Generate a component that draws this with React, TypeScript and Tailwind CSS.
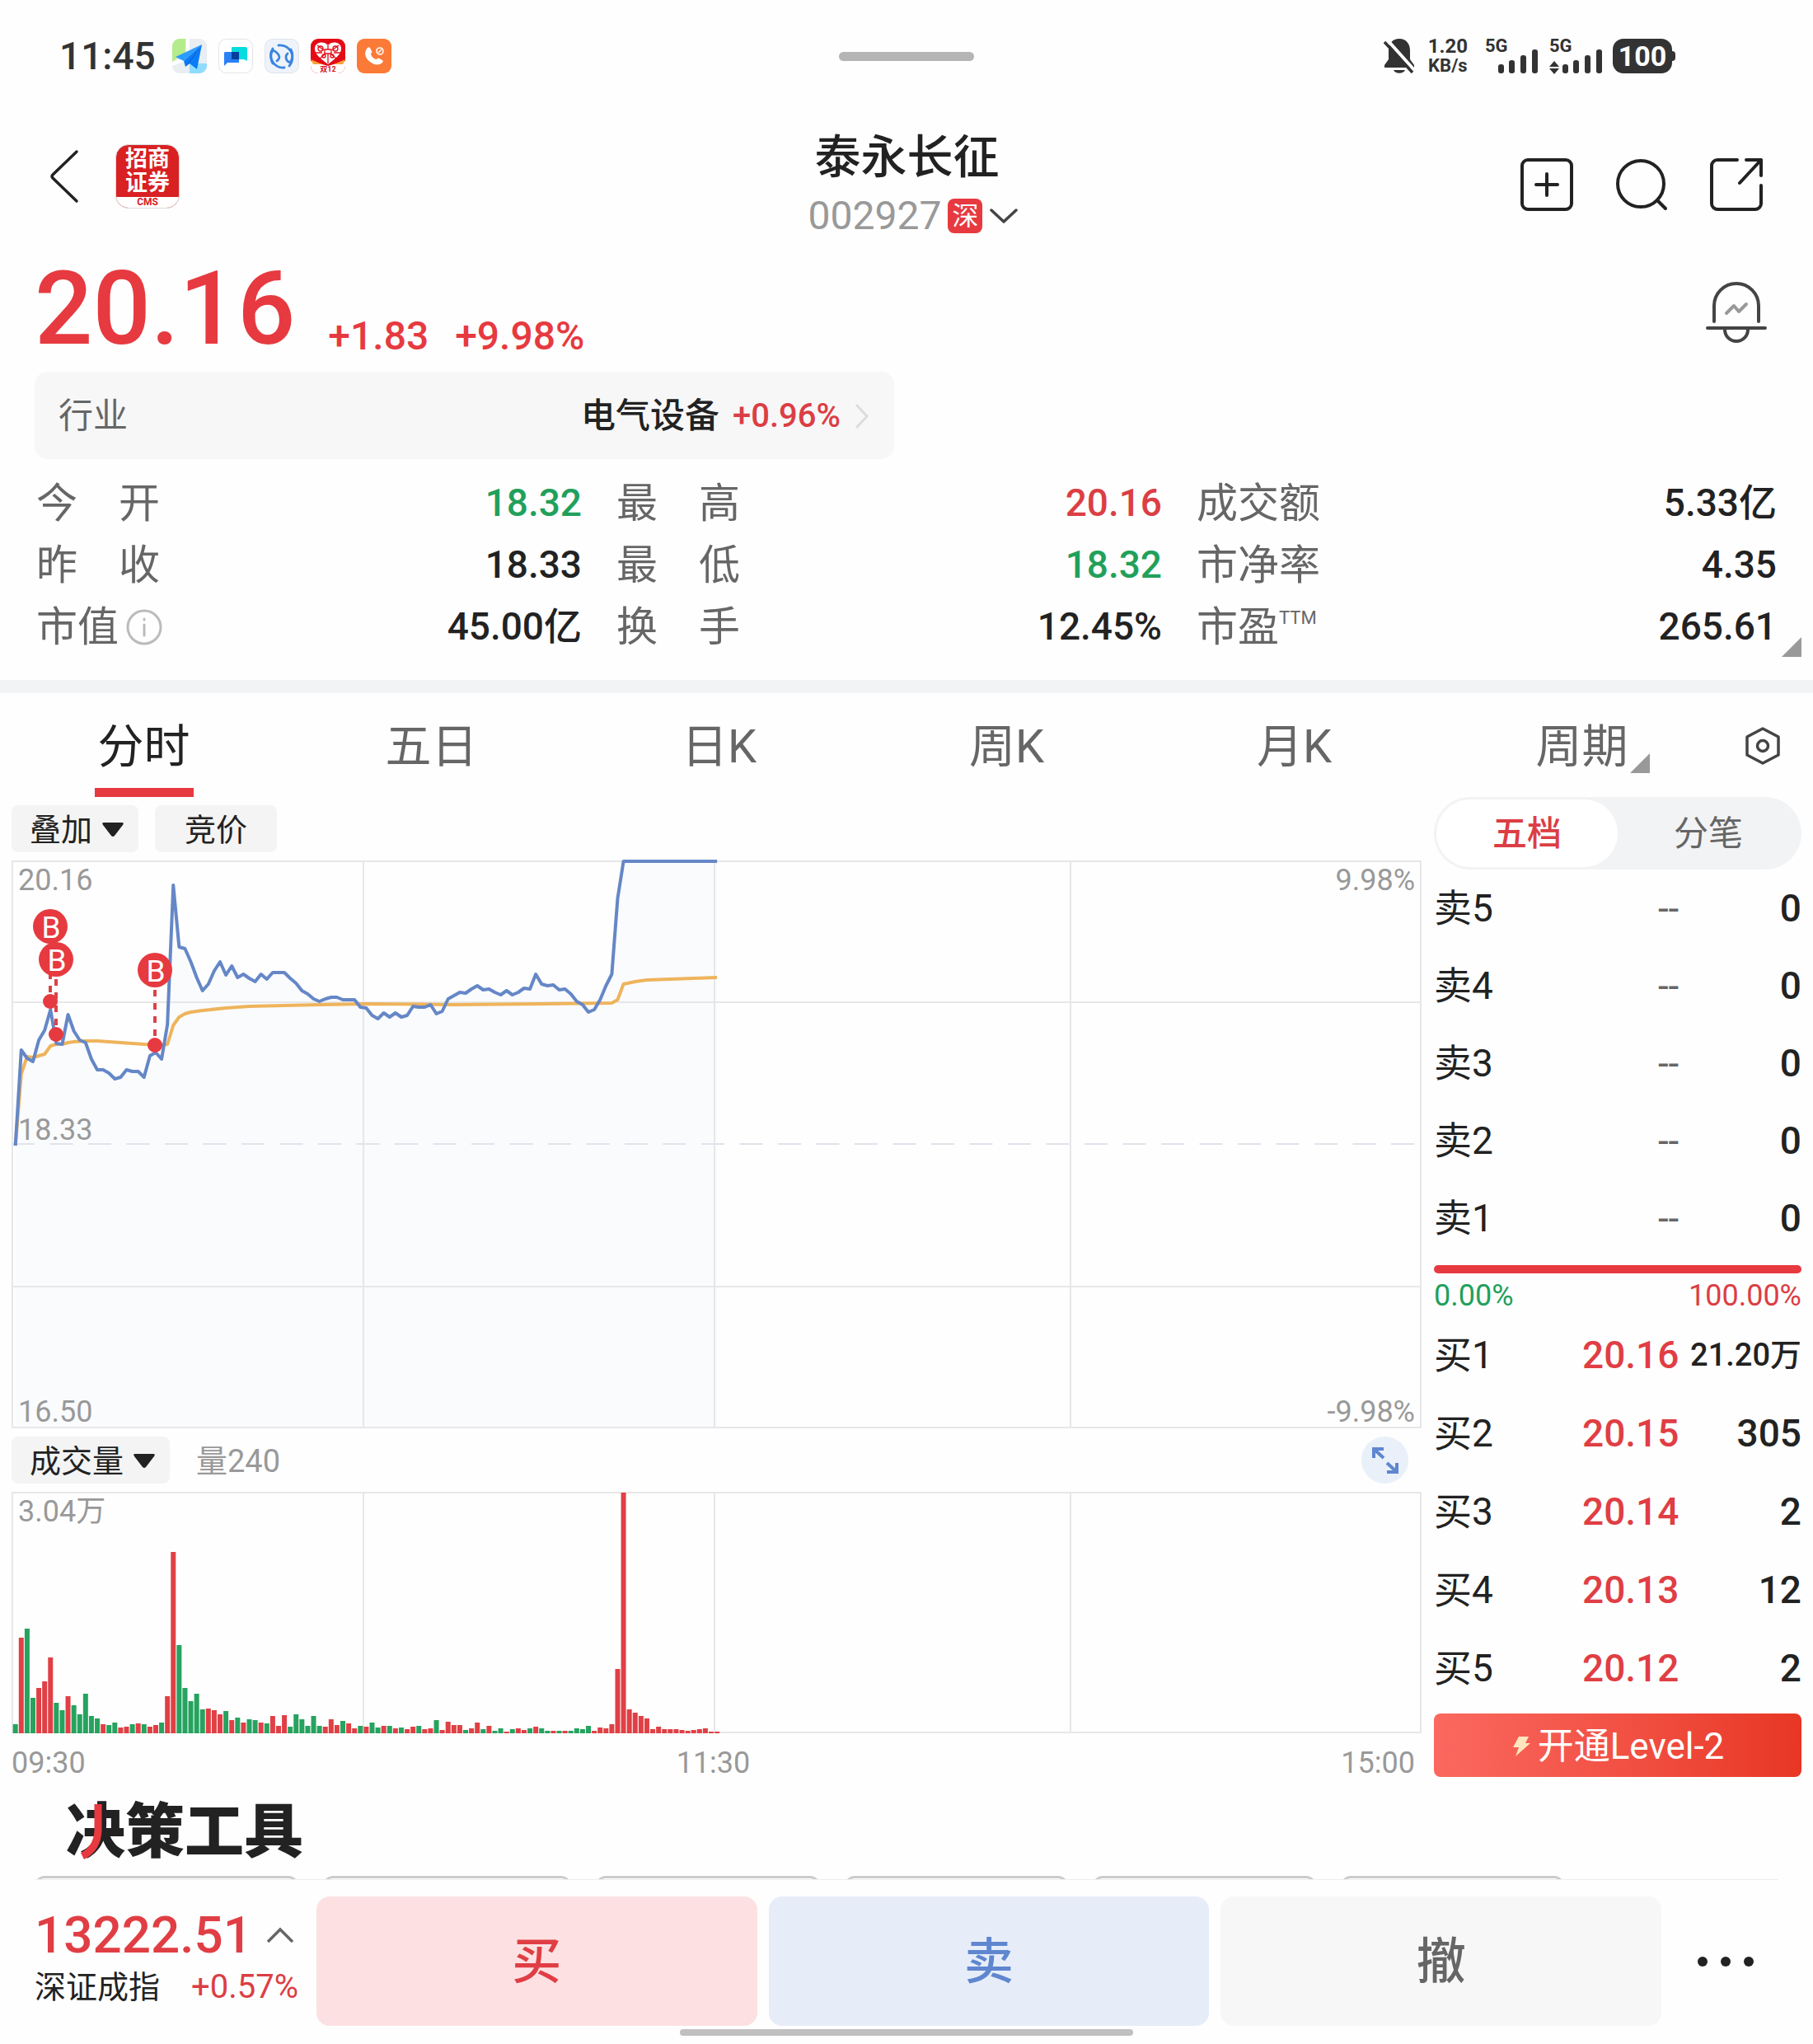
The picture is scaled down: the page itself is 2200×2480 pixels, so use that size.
import React, { useState } from 'react';
import clsx from 'clsx';

type Tone = 'up' | 'down' | 'flat';

interface Stat {
  label: string;
  value: string;
  tone: Tone;
  info?: boolean;
  sup?: string;
}

interface Quote {
  label: string;
  price: string;
  volume: string;
  small?: boolean;
}

const toneClass: Record<Tone, string> = {
  up: 'text-[#db3e44]',
  down: 'text-[#22a05b]',
  flat: 'text-[#222222]',
};

const STATS: Stat[] = [
  { label: '今　开', value: '18.32', tone: 'down' },
  { label: '最　高', value: '20.16', tone: 'up' },
  { label: '成交额', value: '5.33亿', tone: 'flat' },
  { label: '昨　收', value: '18.33', tone: 'flat' },
  { label: '最　低', value: '18.32', tone: 'down' },
  { label: '市净率', value: '4.35', tone: 'flat' },
  { label: '市值', value: '45.00亿', tone: 'flat', info: true },
  { label: '换　手', value: '12.45%', tone: 'flat' },
  { label: '市盈', value: '265.61', tone: 'flat', sup: 'TTM' },
];

const TABS = ['分时', '五日', '日K', '周K', '月K', '周期'];

const SELLS: Quote[] = ['卖5', '卖4', '卖3', '卖2', '卖1'].map(label => ({ label, price: '--', volume: '0' }));

const BUYS: Quote[] = [
  { label: '买1', price: '20.16', volume: '21.20万', small: true },
  { label: '买2', price: '20.15', volume: '305' },
  { label: '买3', price: '20.14', volume: '2' },
  { label: '买4', price: '20.13', volume: '12' },
  { label: '买5', price: '20.12', volume: '2' },
];

// One value per minute from 09:30 to 11:30, in chart units from the top edge
const PRICE = [
  346, 230, 240, 244, 218, 206, 181, 222, 223, 187, 207, 218, 221, 241, 254, 254, 258, 265, 263, 254,
  256, 256, 263, 237, 233, 241, 199, 30, 105, 107, 123, 142, 158, 150, 134, 123, 139, 128, 142, 138,
  143, 147, 138, 144, 136, 136, 136, 143, 149, 158, 162, 168, 171, 168, 166, 166, 169, 169, 169, 178,
  179, 188, 192, 185, 190, 185, 190, 188, 177, 178, 178, 175, 186, 183, 168, 164, 160, 161, 156, 152,
  157, 156, 160, 163, 158, 163, 160, 155, 156, 138, 150, 152, 151, 157, 156, 162, 171, 175, 184, 181,
  169, 152, 138, 46, 1, 1, 1, 1, 1, 1, 1, 1, 1, 1, 1, 1, 1, 1, 1, 1, 1,
];

// [minute, y]
const AVERAGE: [number, number][] = [
  [0, 346], [1, 259], [2, 238], [3, 239], [4, 237], [5, 235], [6, 225], [7, 223], [8, 223], [9, 221],
  [10, 220], [12, 219], [14, 219], [18, 221], [22, 223], [25, 224], [26, 223], [27, 200], [28, 190],
  [29, 186], [30, 184], [32, 182], [36, 179], [40, 177], [46, 176], [52, 175], [60, 174], [75, 175],
  [90, 174], [102, 173], [103, 169], [104, 150], [106, 147], [108, 145], [112, 144], [120, 142],
];

const VOLUME =
  'G11 R116 G127 G43 R55 R63 R92 G37 G28 R45 G34 G23 G48 G21 G18 R11 G10 G13 R7 R8 G11 R12 G11 R8 R10 G13 R45 R220 G107 G55 ' +
  'G39 G48 G29 R30 R28 R23 G27 R16 G19 R13 G17 G16 R13 G12 R21 R9 R22 G8 G23 G17 G9 G21 G9 R8 R17 R10 G15 R12 R6 G9 ' +
  'R8 G13 G7 R9 G9 R6 G7 R5 R8 G9 R5 R6 G16 R4 R14 R10 R10 G4 R6 R13 G5 R9 G3 G6 R2 G5 R6 R4 G6 R8 ' +
  'G6 G3 R3 G3 R3 G3 G6 G5 G9 R3 R7 R6 R11 R78 R292 R29 R25 R21 R18 R5 R8 R5 R5 R5 R4 R3 R4 R5 R6 R2 R2';

const BUY_MARKS = [
  { x: 47, top: 80, dot: 171 },
  { x: 54, top: 120, dot: 211 },
  { x: 174, top: 133, dot: 224 },
];

const minuteX = (i: number) => 4.7 + i * 7.095;

function AppIcons() {
  return (
    <div className="flex items-center gap-[14px]">
      <svg className="size-[42px]" viewBox="0 0 42 42">
        <defs>
          <clipPath id="map-clip"><rect width="42" height="42" rx="9" /></clipPath>
        </defs>
        <g clipPath="url(#map-clip)">
          <rect width="42" height="42" fill="#e8eef2" />
          <path d="M0 0H16V16L0 28Z" fill="#b4ec8c" />
          <path d="M21 30H42V42H21Z" fill="#8fdcff" />
          <path d="M17 0h4v14l-4 4zM0 28l14-4v4L0 33z" fill="#fff" />
          <path d="M36 7L4 22l10 5z" fill="#2c9bff" />
          <path d="M36 7L14 27l2 7 5-4 9 7z" fill="#0b7cf5" />
          <path d="M36 7L16 34l4-4z" fill="#0552c4" />
        </g>
      </svg>
      <svg className="size-[42px]" viewBox="0 0 42 42">
        <rect x="0.5" y="0.5" width="41" height="41" rx="9" fill="#fff" stroke="#e4e4e4" />
        <path d="M17 10h16a2 2 0 0 1 2 2v15l-4-2H16V11z" fill="#06dbe0" />
        <path d="M8 16h17v13H11l-4 4V17z" fill="#2b80f6" />
        <path d="M16 16h9v9h-9z" fill="#073e9c" />
      </svg>
      <svg className="size-[42px]" viewBox="0 0 42 42">
        <rect x="0.5" y="0.5" width="41" height="41" rx="9" fill="#eef3fa" stroke="#dfe4ea" />
        <g fill="none" stroke="#3a85e0" strokeWidth="2.8" strokeLinecap="round">
          <path d="M17 8a15 15 0 0 1 13 25M24 35A15 15 0 0 1 10 12" />
          <path d="M10 30c-3-5-3-12 0-16 3 1 8 5 8 8s-2 4-3 5M32 13c3 5 2 12-1 16-3-1-5-4-5-7s1-3 2-4" />
        </g>
      </svg>
      <svg className="size-[42px]" viewBox="0 0 42 42">
        <rect width="42" height="42" rx="9" fill="#e30b17" />
        <path d="M0 27l21 6 21-6v6a9 9 0 0 1-9 9H9a9 9 0 0 1-9-9z" fill="#fff" />
        <path d="M0 25l14 6H3zM42 25l-14 6h11z" fill="#f9a23b" />
        <path d="M21 31C12 24 5 19 5 12c0-8 11-10 16-4 5-6 16-4 16 4 0 7-7 12-16 19z" fill="#fff" />
        <g fill="none" stroke="#e30b17" strokeWidth="1.3">
          <path d="M21 8v5M21 18v12M8 8l8 6M34 8l-8 6M6 17h8M36 17h-8M11 24l7-6M31 24l-7-6" />
          <circle cx="12" cy="12" r="3" />
          <circle cx="30" cy="12" r="3" />
          <circle cx="16" cy="21" r="2" />
          <circle cx="26" cy="21" r="2" />
          <path d="M17 13h8v5h-8z" />
        </g>
        <text x="21" y="40" textAnchor="middle" fontSize="9" fontWeight="700" fill="#d3121b">双12</text>
      </svg>
      <svg className="size-[42px]" viewBox="0 0 42 42">
        <rect width="42" height="42" rx="9" fill="#fb7a37" />
        <path d="M13 11c-5 5-3 13 3 17 6 5 12 4 15 1 1-1 1-2 0-3l-4-2c-1-1-2 0-3 1-3 0-7-4-7-7 1-1 2-2 1-3l-2-4c-1-1-2-1-3 0z" fill="#fff" />
        <circle cx="28" cy="15" r="4" fill="none" stroke="#fff" strokeWidth="1.6" />
        <path d="M26 17l4-4" stroke="#fff" strokeWidth="1.6" />
      </svg>
    </div>
  );
}

function Signal({ arrows }: { arrows?: boolean }) {
  return (
    <svg className="h-[42px] w-[66px] overflow-visible" viewBox="0 0 66 42" fill="#333333">
      <text x="1" y="16" fontSize="22" fontWeight="700">5G</text>
      {arrows && <path d="M1 34l6-7 6 7zM1 36h12l-6 7z" />}
      <rect x="17" y="31" width="7" height="11" rx="3" />
      <rect x="30" y="26" width="7" height="16" rx="3" />
      <rect x="44" y="20" width="7" height="22" rx="3" />
      <rect x="58" y="13" width="7" height="29" rx="3" />
    </svg>
  );
}

function StatusBar() {
  return (
    <div className="grid h-[136px] grid-cols-3 items-center pl-[72px] pr-[167px] text-[#333333]">
      <div className="flex items-center gap-5">
        <span className="text-[46px] leading-none font-medium">11:45</span>
        <AppIcons />
      </div>
      <div className="flex justify-center pl-24">
        <div className="h-[11px] w-[164px] rounded-full bg-[#b5b5b5]" />
      </div>
      <div className="flex items-center justify-end gap-3">
        <svg className="h-[42px] w-[38px]" viewBox="0 0 38 42">
          <path d="M19 0c9 0 13 7 13 14v11l5 7v3H1v-3l5-7V14C6 7 10 0 19 0zM12 38h14c-2 5-12 5-14 0z" fill="#333333" />
          <path d="M4 1l34 38" stroke="#fff" strokeWidth="4" />
          <path d="M1 4l34 37" stroke="#333333" strokeWidth="3.5" />
        </svg>
        <div className="mr-2 ml-1 text-center text-2xl leading-6 font-bold">
          <div>1.20</div>
          <div className="text-[22px] leading-6">KB/s</div>
        </div>
        <Signal />
        <Signal arrows />
        <div className="flex items-center">
          <span className="flex h-[42px] w-[72px] items-center justify-center rounded-[13px] bg-[#333333] text-[34px] leading-none font-bold text-white">
            100
          </span>
          <span className="h-3 w-1 rounded-r bg-[#333333]" />
        </div>
      </div>
    </div>
  );
}

function Header() {
  return (
    <header className="grid h-[176px] grid-cols-3 items-center pl-[58px] pr-[61px]">
      <div className="flex items-center gap-[42px] pb-5">
        <button type="button" aria-label="返回">
          <svg className="h-[66px] w-10" viewBox="0 0 40 66" fill="none" stroke="#222222" strokeWidth="3.5" strokeLinecap="round" strokeLinejoin="round">
            <path d="M35 3L6 31q-2 2 0 4L35 63" />
          </svg>
        </button>
        <div className="flex size-[78px] flex-col overflow-hidden rounded-2xl border border-[#dddddd] bg-[#d92022] text-center">
          <div className="h-[63px] pt-[3px] text-[27px] leading-[29px] font-bold text-white">
            招商<br />证券
          </div>
          <div className="flex-1 bg-white text-[12px] leading-[12px] font-bold text-[#d92022]">CMS</div>
        </div>
      </div>
      <div className="flex flex-col items-center pt-1 pl-1">
        <h1 className="text-[56px] leading-[72px] font-medium text-[#222222]">泰永长征</h1>
        <button type="button" className="ml-4 flex h-[70px] items-center gap-2">
          <span className="text-5xl leading-none text-[#999999]">002927</span>
          <span className="flex size-[42px] items-center justify-center rounded-lg bg-[#e63a40] text-[32px] leading-none text-white">深</span>
          <svg className="h-5 w-9" viewBox="0 0 36 20" fill="none" stroke="#444444" strokeWidth="3.5" strokeLinecap="round" strokeLinejoin="round">
            <path d="M3 3l15 14L33 3" />
          </svg>
        </button>
      </div>
      <div className="flex items-center justify-end gap-[51px]">
        <button type="button" aria-label="加自选">
          <svg className="size-16" viewBox="0 0 64 64" fill="none" stroke="#222222" strokeWidth="4" strokeLinecap="round">
            <rect x="2" y="2" width="60" height="60" rx="7" />
            <path d="M32 19v26M19 32h26" />
          </svg>
        </button>
        <button type="button" aria-label="搜索">
          <svg className="size-16" viewBox="0 0 64 64" fill="none" stroke="#222222" strokeWidth="4" strokeLinecap="round">
            <circle cx="31" cy="31" r="28" />
            <path d="M51 51l10 10" />
          </svg>
        </button>
        <button type="button" aria-label="分享">
          <svg className="size-16" viewBox="0 0 64 64" fill="none" stroke="#222222" strokeWidth="4" strokeLinecap="round" strokeLinejoin="round">
            <path d="M33 2H9a7 7 0 0 0-7 7v46a7 7 0 0 0 7 7h46a7 7 0 0 0 7-7V33" />
            <path d="M44 2h18v19M62 2L36 30" />
          </svg>
        </button>
      </div>
    </header>
  );
}

function PriceSummary() {
  return (
    <section className="px-[42px]">
      <div className="mb-[13px] flex h-[126px] items-center justify-between pr-[14px]">
        <div className="flex items-end text-[#e63a40]">
          <span className="text-[124px] leading-none font-medium">20.16</span>
          <span className="ml-10 text-5xl leading-[58px] font-medium">+1.83</span>
          <span className="ml-8 text-5xl leading-[58px] font-medium">+9.98%</span>
        </div>
        <button type="button" aria-label="预警" className="pt-2">
          <svg className="size-[74px]" viewBox="0 0 74 74" fill="none" stroke="#444444" strokeWidth="4" strokeLinecap="round" strokeLinejoin="round">
            <path d="M10 48V29a27 27 0 0 1 54 0v19M2 56h70M23 58a14 14 0 0 0 28 0" />
            <path d="M25 38l9-9 6 7 9-9" stroke="#999999" />
          </svg>
        </button>
      </div>
      <button type="button" className="flex h-[106px] w-[calc(50%-15px)] items-center rounded-2xl bg-[#f7f7f7] px-[29px] pt-[2px] text-[42px] leading-none">
        <span className="flex-1 text-left text-[#666666]">行业</span>
        <span className="font-medium text-[#222222]">电气设备</span>
        <span className="ml-4 text-[40px] leading-none font-medium text-[#db3e44]">+0.96%</span>
        <svg className="ml-4 h-8 w-5" viewBox="0 0 20 32" fill="none" stroke="#dddddd" strokeWidth="3">
          <path d="M3 2l13 14L3 30" />
        </svg>
      </button>
    </section>
  );
}

function StatGrid() {
  return (
    <section className="relative pt-4 pb-[27px]">
      <dl className="grid grid-cols-3 px-11">
        {STATS.map((s, i) => (
          <div key={s.label} className={clsx('flex h-[75px] items-center justify-between leading-none', i % 3 !== 2 && 'pr-[42px]')}>
            <dt className="flex items-center text-[50px] text-[#666666]">
              {s.label}
              {s.info && (
                <svg className="ml-2 size-[46px]" viewBox="0 0 46 46" fill="none" stroke="#bbbbbb" strokeWidth="3" strokeLinecap="round">
                  <circle cx="23" cy="23" r="20" />
                  <path d="M23 20v13M23 13v1" />
                </svg>
              )}
              {s.sup && <sup className="text-[22px]">{s.sup}</sup>}
            </dt>
            <dd className={clsx('pb-[2px] text-[46px] font-medium', toneClass[s.tone])}>{s.value}</dd>
          </div>
        ))}
      </dl>
      <svg className="absolute right-[14px] bottom-7 size-6" viewBox="0 0 24 24">
        <path d="M24 0v24H0z" fill="#999999" />
      </svg>
    </section>
  );
}

function PeriodTabs() {
  const [active, setActive] = useState('分时');
  return (
    <nav className="flex h-[126px]">
      {TABS.map(tab => (
        <button key={tab} type="button" onClick={() => setActive(tab)} className="relative flex flex-1 justify-center text-[56px] leading-none">
          <span
            className={clsx(
              'flex h-full items-center border-b-[11px] px-1 pt-[14px]',
              tab === active ? 'border-[#e63a40] text-[#222222]' : 'border-transparent text-[#666666]'
            )}
          >
            {tab}
          </span>
          {tab === '周期' && (
            <svg className="absolute right-[92px] bottom-[29px] size-6" viewBox="0 0 24 24">
              <path d="M24 0v24H0z" fill="#999999" />
            </svg>
          )}
        </button>
      ))}
      <button type="button" aria-label="设置" className="flex w-[106px] items-center justify-center pt-[2px] pr-4">
        <svg className="size-12" viewBox="0 0 48 48" fill="none" stroke="#444444" strokeWidth="3.5" strokeLinejoin="round">
          <path d="M24 3l19 10v22L24 45 5 35V13z" />
          <circle cx="24" cy="24" r="6.5" />
        </svg>
      </button>
    </nav>
  );
}

function PriceChart() {
  const line = PRICE.map((y, i) => `${minuteX(i)},${y}`).join(' ');
  const average = AVERAGE.map(([i, y]) => `${minuteX(i)},${y}`).join(' ');
  return (
    <div className="relative text-4xl leading-none text-[#999999]">
      <svg className="block h-auto w-full overflow-visible" viewBox="0 0 1711 689">
        <polygon points={`${minuteX(0)},688 ${line} ${minuteX(120)},688`} fill="#fafbfd" />
        <g stroke="#e7e7e9" strokeWidth="2">
          <path d="M1 0V689M427 0V689M853 0V689M1285 0V689M1710 0V689" />
          <path d="M0 1H1711M0 172H1711M0 517H1711M0 688H1711" />
          <path d="M0 344H1711" stroke="#e2e2ec" strokeDasharray="28 18.5" />
        </g>
        <polyline points={average} fill="none" stroke="#eeb45c" strokeWidth="4" strokeLinejoin="round" />
        <polyline points={line} fill="none" stroke="#6587c7" strokeWidth="4" strokeLinejoin="round" />
        {BUY_MARKS.map(m => (
          <g key={m.x}>
            <path d={`M${m.x} ${m.top + 24}V${m.dot}`} stroke="#d9444a" strokeWidth="4" strokeDasharray="8 8" />
            <circle cx={m.x} cy={m.dot} r="9" fill="#e63a40" />
            <circle cx={m.x} cy={m.top} r="21" fill="#e63a40" />
            <text x={m.x + 1} y={m.top + 14} textAnchor="middle" fontSize="37" fill="#fff">B</text>
          </g>
        ))}
      </svg>
      <span className="absolute top-1.5 left-2">20.16</span>
      <span className="absolute top-1.5 right-2">9.98%</span>
      <span className="absolute bottom-1/2 left-2">18.33</span>
      <span className="absolute bottom-0.5 left-2">16.50</span>
      <span className="absolute right-2 bottom-0.5">-9.98%</span>
    </div>
  );
}

function VolumeChart() {
  return (
    <div className="relative text-4xl leading-none text-[#999999]">
      <svg className="block h-auto w-full" viewBox="0 0 1711 293">
        <g stroke="#e7e7e9" strokeWidth="2">
          <path d="M1 0V293M427 0V293M853 0V293M1285 0V293M1710 0V293M0 1H1711M0 292H1711" />
        </g>
        {VOLUME.split(' ').map((v, i) => {
          const h = Number(v.slice(1));
          return <rect key={i} x={minuteX(i) - 3} y={293 - h} width="6" height={h} fill={v[0] === 'R' ? '#e04045' : '#25a35f'} />;
        })}
      </svg>
      <span className="absolute top-1.5 left-2">3.04万</span>
    </div>
  );
}

function Caret() {
  return (
    <svg className="h-[18px] w-[26px]" viewBox="0 0 26 18">
      <path d="M2 0h22q3 0 1 3L15 16q-2 2-4 0L1 3Q-1 0 2 0z" fill="#222222" />
    </svg>
  );
}

function ChartPanel() {
  return (
    <section className="min-w-0 flex-1">
      <div className="flex gap-5 py-[10px] text-[38px] leading-none text-[#222222]">
        <button type="button" className="flex h-[57px] items-center gap-3 rounded-lg bg-[#f4f4f4] pt-[2px] pr-[18px] pl-[22px]">
          叠加
          <Caret />
        </button>
        <button type="button" className="flex h-[57px] items-center rounded-lg bg-[#f4f4f4] px-9 pt-[2px]">竞价</button>
      </div>
      <PriceChart />
      <div className="flex items-center py-[10px] text-[38px] leading-none text-[#222222]">
        <button type="button" className="flex h-[57px] items-center gap-3 rounded-lg bg-[#f4f4f4] pt-[2px] pr-[18px] pl-[22px]">
          成交量
          <Caret />
        </button>
        <span className="ml-8 flex-1 pt-[2px] text-[38px] leading-none text-[#999999]">量240</span>
        <button type="button" aria-label="展开" className="mr-4 flex size-[57px] items-center justify-center rounded-full bg-[#e9f0fa]">
          <svg className="size-9" viewBox="0 0 36 36" fill="none" stroke="#5f86cf" strokeWidth="4">
            <path d="M4 15V4h12M4 4l12 11M32 21v11H20M32 32L20 21" />
          </svg>
        </button>
      </div>
      <VolumeChart />
      <div className="grid grid-cols-3 pt-[18px] pr-2 text-4xl leading-9 text-[#999999]">
        <span>09:30</span>
        <span className="text-center">11:30</span>
        <span className="text-right">15:00</span>
      </div>
    </section>
  );
}

function QuoteTable({ rows, side }: { rows: Quote[]; side: 'sell' | 'buy' }) {
  return (
    <table className="w-full table-fixed text-[46px] leading-none text-[#222222]">
      <tbody>
        {rows.map(q => (
          <tr key={q.label} className={side === 'sell' ? 'h-[94px]' : 'h-[95px]'}>
            <th scope="row" className="w-1/4 text-left font-normal">{q.label}</th>
            <td className={clsx('text-right', side === 'buy' ? 'font-medium text-[#e03e44]' : 'text-[#666666]')}>{q.price}</td>
            <td className={clsx('w-1/3 text-right font-medium', q.small && 'text-[38px]')}>{q.volume}</td>
          </tr>
        ))}
      </tbody>
    </table>
  );
}

function OrderBook() {
  const [mode, setMode] = useState('五档');
  return (
    <aside className="w-[446px] shrink-0">
      <div className="flex h-[88px] rounded-full bg-[#f2f3f5] p-[3px] text-[42px] leading-none">
        {['五档', '分笔'].map(m => (
          <button
            key={m}
            type="button"
            onClick={() => setMode(m)}
            className={clsx('flex-1 rounded-full pt-[2px]', m === mode ? 'bg-white font-medium text-[#db3e44]' : 'text-[#666666]')}
          >
            {m}
          </button>
        ))}
      </div>
      <QuoteTable rows={SELLS} side="sell" />
      <div className="mt-[10px] h-[10px] rounded-full bg-[#e63a40]" />
      <div className="flex h-[51px] items-center justify-between pt-[2px] text-4xl leading-none">
        <span className="text-[#22a05b]">0.00%</span>
        <span className="text-[#db3e44]">100.00%</span>
      </div>
      <QuoteTable rows={BUYS} side="buy" />
      <button
        type="button"
        className="mt-2 flex h-[77px] w-full items-center justify-center gap-2 rounded-lg bg-linear-to-r from-[#fb685f] to-[#e83624] pt-[2px] text-[44px] leading-none text-white"
      >
        <svg className="h-7 w-6" viewBox="0 0 24 28">
          <path d="M9 2h12l-4 8h6L5 26l4-11H2z" fill="#ffe6bd" />
        </svg>
        开通Level-2
      </button>
    </aside>
  );
}

function DecisionTools() {
  return (
    <section>
      <h2 className="relative mt-[30px] ml-20 w-fit text-[72px] leading-none font-black text-[#222222]">
        决策工具
        <svg className="absolute top-0 left-0 size-[72px]" viewBox="0 0 72 72" fill="none" stroke="#e63a40" strokeWidth="9">
          <path d="M39 2V34Q38 56 20 65" />
        </svg>
      </h2>
      <div className="mx-[42px] mt-[17px] flex h-[5px] gap-[30px] overflow-hidden border-b border-[#eeeeee] pr-[260px]">
        <div className="h-20 flex-[317] rounded-xl border-[3px] border-[#cccccc]" />
        <div className="h-20 flex-[299] rounded-xl border-[3px] border-[#cccccc]" />
        <div className="h-20 flex-[268] rounded-xl border-[3px] border-[#cccccc]" />
        <div className="h-20 flex-[268] rounded-xl border-[3px] border-[#cccccc]" />
        <div className="h-20 flex-[268] rounded-xl border-[3px] border-[#cccccc]" />
        <div className="h-20 flex-[268] rounded-xl border-[3px] border-[#cccccc]" />
      </div>
    </section>
  );
}

function TradeBar() {
  return (
    <footer>
      <div className="flex gap-[14px] pt-5 pl-[42px] text-[60px] leading-none font-medium">
        <button type="button" className="mr-2 flex w-80 flex-col justify-center gap-3 pb-3 text-left">
          <span className="flex items-center gap-4 text-[62px] leading-none text-[#e03e44]">
            13222.51
            <svg className="h-5 w-9" viewBox="0 0 36 20" fill="none" stroke="#666666" strokeWidth="3.5">
              <path d="M3 18L18 3l15 15" />
            </svg>
          </span>
          <span className="flex items-center justify-between text-[38px] leading-none font-normal text-[#222222]">
            深证成指
            <span className="text-[40px] leading-none text-[#db3e44]">+0.57%</span>
          </span>
        </button>
        <button type="button" className="h-[157px] flex-1 rounded-2xl bg-[#fde1e2] pt-[2px] text-[#e03e44]">买</button>
        <button type="button" className="h-[157px] flex-1 rounded-2xl bg-[#e6edf9] pt-[2px] text-[#5f86cf]">卖</button>
        <button type="button" className="h-[157px] flex-1 rounded-2xl bg-[#f7f7f7] pt-[2px] text-[#666666]">撤</button>
        <button type="button" aria-label="更多" className="flex w-[170px] items-center justify-center gap-4 pr-[42px]">
          <span className="size-3 shrink-0 rounded-full bg-[#222222]" />
          <span className="size-3 shrink-0 rounded-full bg-[#222222]" />
          <span className="size-3 shrink-0 rounded-full bg-[#222222]" />
        </button>
      </div>
      <div className="mx-auto mt-1 mb-[7px] h-2 w-1/4 rounded-full bg-[#c0c0c0]" />
    </footer>
  );
}

export default function App() {
  return (
    <div className="min-h-screen bg-[#fefefe] font-['Roboto','Noto_Sans_CJK_SC',sans-serif]">
      <StatusBar />
      <Header />
      <PriceSummary />
      <StatGrid />
      <div className="h-4 bg-[#f2f3f5]" />
      <PeriodTabs />
      <main className="flex gap-[15px] px-[14px]">
        <ChartPanel />
        <OrderBook />
      </main>
      <DecisionTools />
      <TradeBar />
    </div>
  );
}
